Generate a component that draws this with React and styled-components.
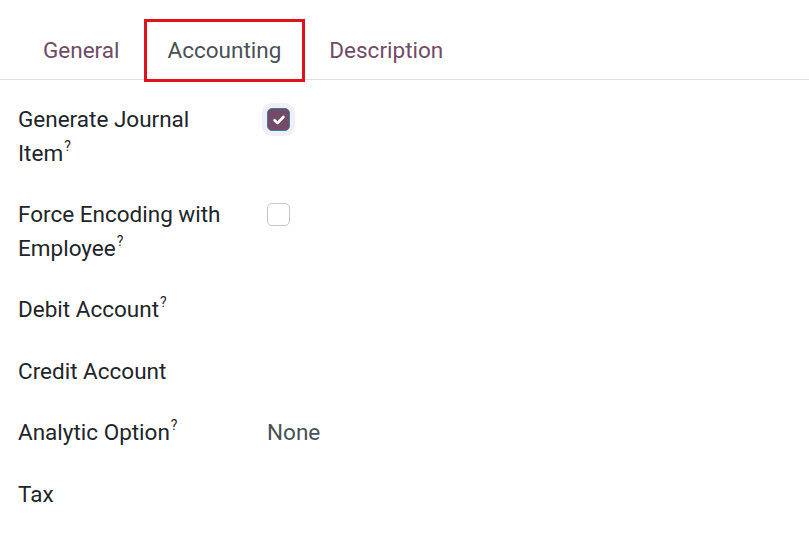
import styled, { createGlobalStyle } from 'styled-components';

const GlobalStyle = createGlobalStyle`
  html, body {
    margin: 0;
    padding: 0;
    background: #ffffff;
  }
  body {
    font-family: Roboto, 'Liberation Sans', sans-serif;
    color: #212529;
  }
`;

const tabs = [
  { label: 'General' },
  { label: 'Accounting', active: true },
  { label: 'Description' },
];

const fields = [
  { label: 'Generate Journal Item', help: true, kind: 'check', checked: true },
  { label: 'Force Encoding with Employee', help: true, kind: 'check' },
  { label: 'Debit Account', help: true },
  { label: 'Credit Account' },
  { label: 'Analytic Option', help: true, value: 'None' },
  { label: 'Tax' },
];

const CheckMark = () => (
  <svg width="12" height="10" viewBox="0 0 12 10" fill="none">
    <path d="M1.6 5.2 L4.6 8 L10.4 2" stroke="#fff" strokeWidth="2.6" strokeLinecap="round" strokeLinejoin="round" />
  </svg>
);

const App = () => {
  return (
    <Page>
      <GlobalStyle />
      <TabBar>
        {tabs.map((t) => (
          <Tab key={t.label} $active={t.active}>
            {t.label}
          </Tab>
        ))}
      </TabBar>
      <Form>
        {fields.map((f) => (
          <Row key={f.label}>
            <Label>
              {f.label}
              {f.help && <Help>?</Help>}
            </Label>
            <Value>
              {f.kind === 'check' && (
                <Checkbox $checked={f.checked}>{f.checked && <CheckMark />}</Checkbox>
              )}
              {f.value && <ValueText>{f.value}</ValueText>}
            </Value>
          </Row>
        ))}
      </Form>
    </Page>
  );
};

const Page = styled.div`
  width: 809px;
  height: 557px;
  overflow: hidden;
`;

const TabBar = styled.nav`
  display: flex;
  align-items: stretch;
  padding: 20px 0 0 19px;
  border-bottom: 1px solid #dee2e6;
`;

const Tab = styled.div`
  position: relative;
  padding: 13px 24px 12px;
  font-size: 22.5px;
  line-height: 34px;
  color: ${(p) => (p.$active ? '#495057' : '#714b67')};

  ${(p) =>
    p.$active &&
    `
    &::after {
      content: '';
      position: absolute;
      left: 0;
      right: 0;
      top: -1px;
      bottom: -3px;
      border: 3px solid #e3111b;
      pointer-events: none;
    }
  `}
`;

const Form = styled.div`
  display: flex;
  flex-direction: column;
  gap: 28px;
  padding: 23px 0 0 18px;
`;

const Row = styled.div`
  display: grid;
  grid-template-columns: 249px 1fr;
  align-items: start;
`;

const Label = styled.div`
  max-width: 212px;
  font-size: 22.5px;
  line-height: 33.5px;
  color: #212529;
`;

const Help = styled.sup`
  font-size: 14px;
  line-height: 0;
  margin-left: 1px;
  vertical-align: 10px;
`;

const Value = styled.div`
  display: flex;
  align-items: center;
  min-height: 33.5px;
`;

const ValueText = styled.span`
  font-size: 22.5px;
  line-height: 33.5px;
  color: #495057;
`;

const Checkbox = styled.span`
  box-sizing: border-box;
  display: inline-flex;
  align-items: center;
  justify-content: center;
  width: 23px;
  height: 23px;
  border-radius: 5px;
  border: 1px solid ${(p) => (p.$checked ? '#3f7f97' : '#c4c7cc')};
  background: ${(p) => (p.$checked ? '#714b67' : '#ffffff')};
  box-shadow: ${(p) => (p.$checked ? '0 0 0 5px #eef0f6' : 'none')};
`;

export default App;
